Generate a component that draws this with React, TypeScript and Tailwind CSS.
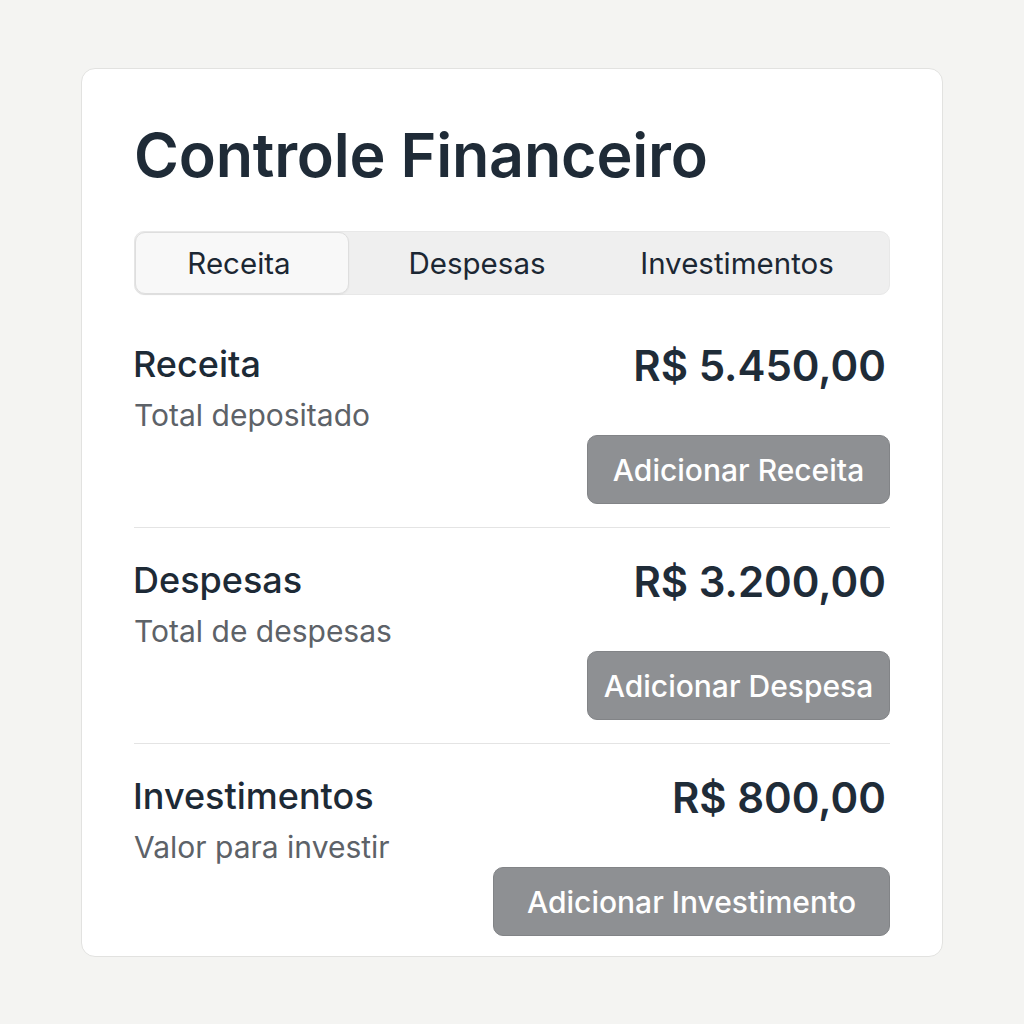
import React from "react";

const font = { fontFamily: "Inter, 'Noto Sans', 'Liberation Sans', sans-serif" };

function Section({
  label,
  sub,
  amount,
  button,
  btnW,
  last,
}: {
  label: string;
  sub: string;
  amount: string;
  button: string;
  btnW: string;
  last?: boolean;
}) {
  return (
    <div className={`flex justify-between pt-[32px] ${last ? "pb-[20px]" : "pb-[23px] border-b border-[#e4e4e4]"}`}>
      <div className="flex flex-col">
        <div className="text-[36px] leading-[41px] font-medium text-[#1d2a36] -ml-[1px]">{label}</div>
        <div className="text-[30px] leading-[34px] text-[#5d6268] mt-[13px]">{sub}</div>
      </div>
      <div className="flex flex-col items-end">
        <div className="text-[42px] leading-[48px] font-semibold text-[#1f2c38] mr-[4px] -mt-[2px]">{amount}</div>
        <button
          className={`${btnW} h-[69px] mt-[45px] rounded-[10px] bg-[#8e9093] border border-[#828487] text-white text-[30px] font-medium leading-none flex items-center justify-center`}
        >
          {button}
        </button>
      </div>
    </div>
  );
}

export default function App() {
  return (
    <div className="min-h-screen w-full bg-[#f4f4f2] pt-[68px]" style={font}>
      <div className="mx-[81px] w-[862px] bg-white rounded-[14px] border border-[#e2e2e0] px-[52px] pt-[51px]">
        <h1 className="text-[61px] leading-[70px] font-semibold text-[#1f2b37] tracking-[-0.2px]">Controle Financeiro</h1>
        <div className="mt-[41px] mb-[17px] h-[64px] rounded-[10px] bg-[#efefef] border border-[#e8e8e8] flex items-stretch text-[29.5px] text-[#1c2733]">
          <div className="w-[214px] rounded-[10px] bg-[#f8f8f8] border border-[#dedede] shadow-[0_1px_2px_rgba(0,0,0,0.05)] flex items-center justify-center pr-[6px]">
            Receita
          </div>
          <div className="w-[256px] flex items-center justify-center">Despesas</div>
          <div className="w-[264px] flex items-center justify-center">Investimentos</div>
        </div>
        <Section
          label="Receita"
          sub="Total depositado"
          amount="R$ 5.450,00"
          button="Adicionar Receita"
          btnW="w-[303px]"
        />
        <Section
          label="Despesas"
          sub="Total de despesas"
          amount="R$ 3.200,00"
          button="Adicionar Despesa"
          btnW="w-[303px]"
        />
        <Section
          label="Investimentos"
          sub="Valor para investir"
          amount="R$ 800,00"
          button="Adicionar Investimento"
          btnW="w-[397px]"
          last
        />
      </div>
    </div>
  );
}
